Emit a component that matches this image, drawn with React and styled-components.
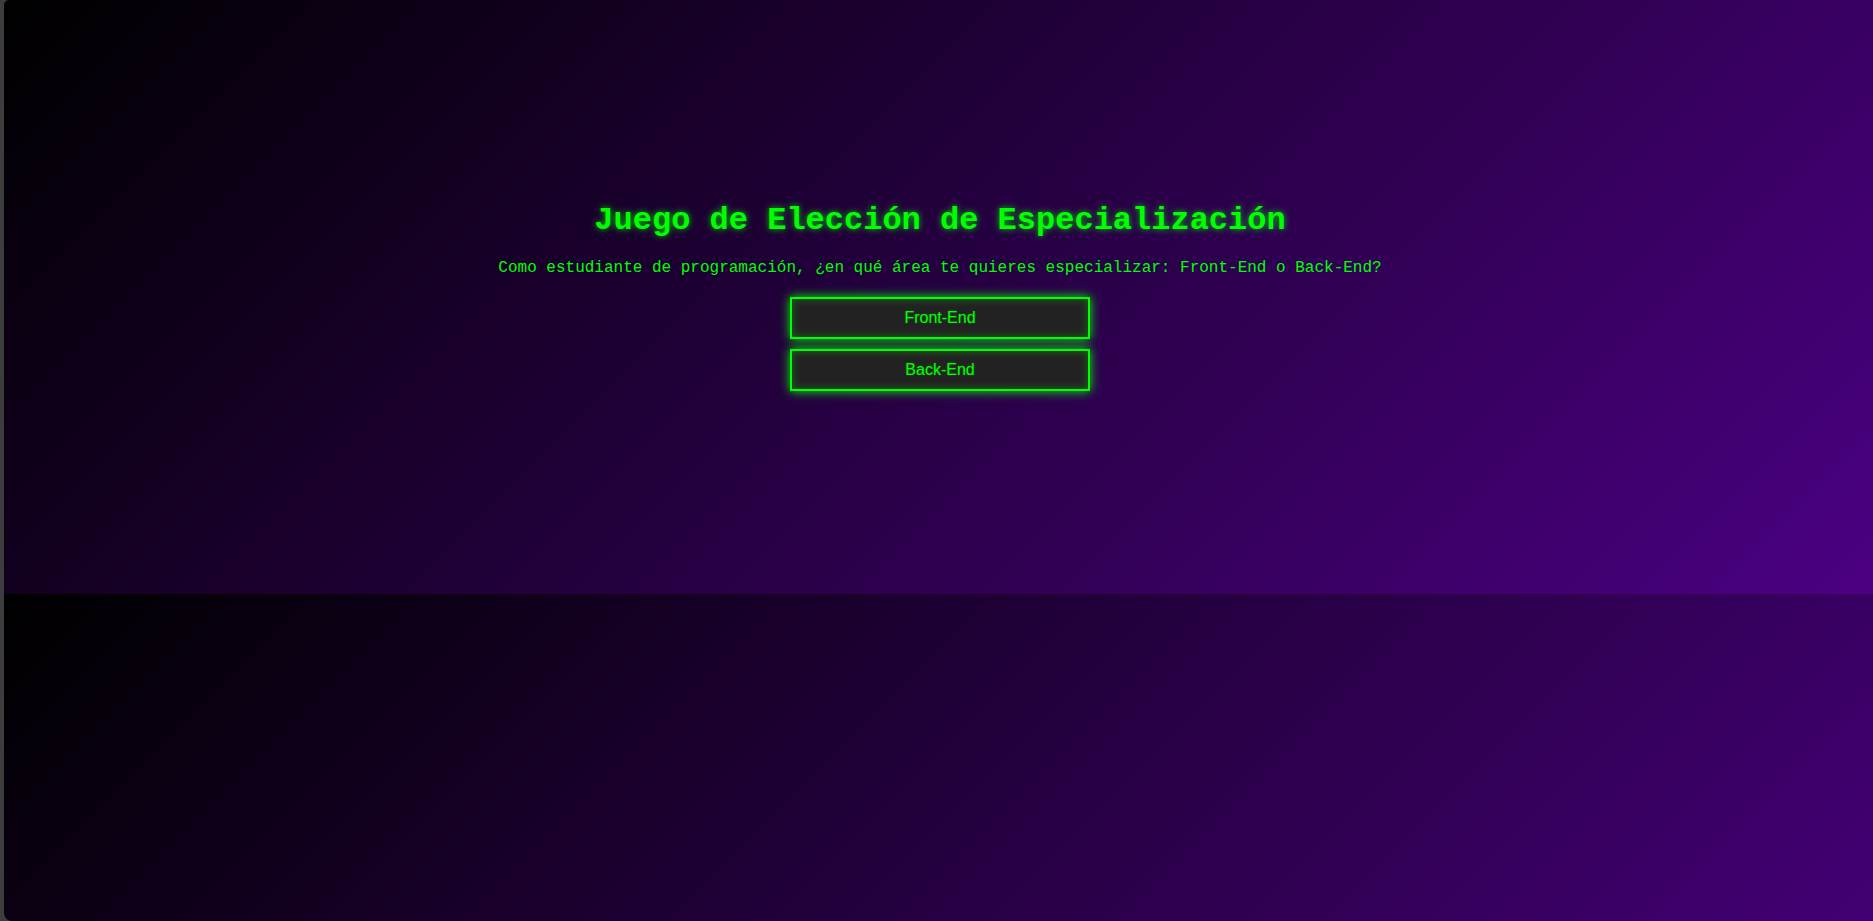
import React from 'react';
import styled, { createGlobalStyle } from 'styled-components';

const GlobalStyle = createGlobalStyle`
  html,
  body {
    margin: 0;
    padding: 0;
    height: 100%;
    background: #3d3d3d;
  }

  #root {
    height: 100%;
  }
`;

// gradient tile repeats below the game panel, like the original page
export const Screen = styled.div`
  height: 100vh;
  margin-left: 4px;
  border-radius: 5px 0 0 8px;
  overflow: hidden;
  background: linear-gradient(135deg, #000000, #4b0082);
  background-size: 100% 594px;
  background-repeat: repeat-y;
  font-family: 'Liberation Mono', 'Courier New', monospace;
  color: #00ff00;
`;

export const GamePanel = styled.main`
  height: 594px;
  padding-left: 3px;
  display: flex;
  flex-direction: column;
  align-items: center;
  justify-content: center;
  text-align: center;
`;

export const Title = styled.h1`
  margin: 0 0 20px;
  font-size: 32px;
  line-height: 36px;
  font-weight: bold;
  text-shadow: 0 0 6px rgba(0, 255, 0, 0.8);
`;

export const Question = styled.p`
  margin: 0 0 20px;
  font-size: 16px;
  line-height: 18px;
`;

export const Choices = styled.div`
  display: flex;
  flex-direction: column;
  gap: 10px;
`;

export const ChoiceButton = styled.button`
  width: 300px;
  height: 42px;
  padding: 10px;
  background: #222222;
  border: 2px solid #00ff00;
  color: #00ff00;
  font-family: 'Liberation Sans', Arial, sans-serif;
  font-size: 16px;
  cursor: pointer;
  box-shadow: 0 0 10px #00ff00, inset 0 0 8px rgba(0, 255, 0, 0.35);
  text-shadow: 0 0 2px rgba(0, 255, 0, 0.4);

  &:hover {
    background: #00ff00;
    color: #222222;
  }
`;

const choices = ['Front-End', 'Back-End'];

export default function App() {
  return (
    <>
      <GlobalStyle />
      <Screen>
        <GamePanel>
          <Title>Juego de Elección de Especialización</Title>
          <Question>
            Como estudiante de programación, ¿en qué área te quieres especializar: Front-End o Back-End?
          </Question>
          <Choices>
            {choices.map((c) => (
              <ChoiceButton key={c}>{c}</ChoiceButton>
            ))}
          </Choices>
        </GamePanel>
      </Screen>
    </>
  );
}
